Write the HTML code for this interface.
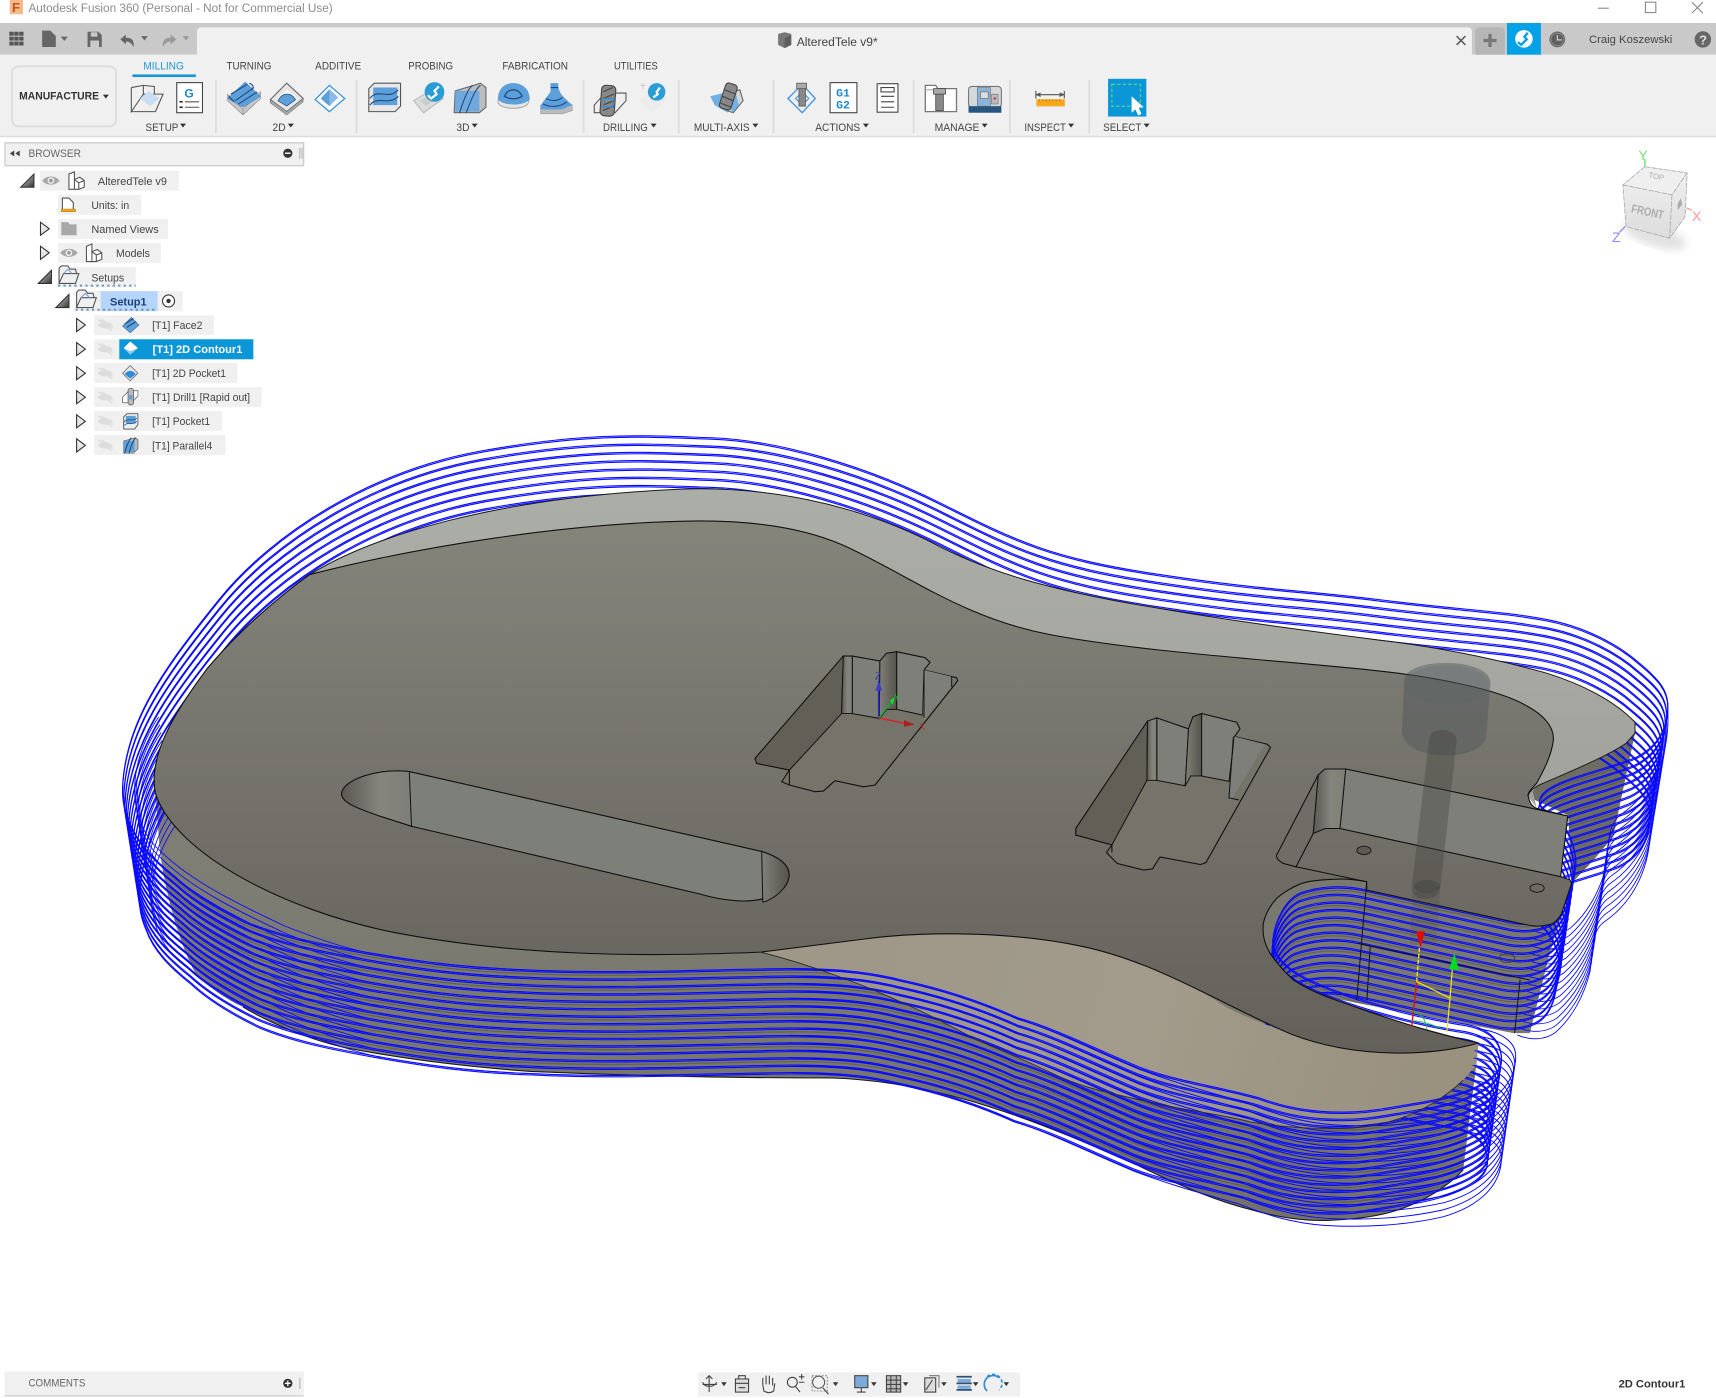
<!DOCTYPE html>
<html><head><meta charset="utf-8"><title>Autodesk Fusion 360</title>
<style>
html,body{margin:0;padding:0;background:#fff;overflow:hidden;width:1716px;height:1398px}
#r{display:block;position:absolute;left:0;top:0;width:1716px;height:1398px}
text{font-family:"Liberation Sans",sans-serif;font-size:10px;fill:#444}
.b{font-weight:bold}
.g{fill:#666}
</style></head><body>
<svg id="r" viewBox="0 0 1568 1277.4" preserveAspectRatio="none" xmlns="http://www.w3.org/2000/svg">
<defs>
<linearGradient id="fc" x1="0" y1="480" x2="0" y2="960" gradientUnits="userSpaceOnUse"><stop offset="0" stop-color="#84847b"/><stop offset="1" stop-color="#64615a"/></linearGradient>
<linearGradient id="bg" x1="800" y1="860" x2="1300" y2="1000" gradientUnits="userSpaceOnUse"><stop offset="0" stop-color="#9f9888"/><stop offset=".5" stop-color="#a29b8b"/><stop offset="1" stop-color="#9a917f"/></linearGradient>
<linearGradient id="lt" x1="0" y1="450" x2="0" y2="720" gradientUnits="userSpaceOnUse"><stop offset="0" stop-color="#abaea7"/><stop offset="1" stop-color="#a2a39c"/></linearGradient>
<linearGradient id="wl" x1="0" y1="750" x2="0" y2="1110" gradientUnits="userSpaceOnUse"><stop offset="0" stop-color="#7f7f75"/><stop offset="1" stop-color="#73726a"/></linearGradient>
<linearGradient id="cyl" x1="0" x2="1" y1="0" y2="0"><stop offset="0" stop-color="#5a5850"/><stop offset=".55" stop-color="#85857d"/><stop offset="1" stop-color="#7e7f78"/></linearGradient>
<linearGradient id="cyr" x1="0" x2="1" y1="0" y2="0"><stop offset="0" stop-color="#808179"/><stop offset="1" stop-color="#55534b"/></linearGradient>
<linearGradient id="tr" x1="0" x2="1" y1="0" y2="1"><stop offset="0" stop-color="#ddd"/><stop offset="1" stop-color="#333"/></linearGradient>
<linearGradient id="cu" x1="0" y1="0" x2="0" y2="1"><stop offset="0" stop-color="#f2f2f2"/><stop offset="1" stop-color="#dcdcdc"/></linearGradient>
<filter id="bl"><feGaussianBlur stdDeviation="4"/></filter>
<path id="wall1" d="M142,725L146,777C150,810 162,860 180,892C195,905 210,915 222,920C250,937 285,950 314,957C370,968 430,975 485,979C600,984 700,985 760,985C860,988 950,1025 1040,1065C1075,1082 1110,1097 1142,1105C1170,1113 1195,1116 1215,1115C1240,1114 1262,1111 1279,1105C1305,1096 1325,1082 1337,1069L1349,973L1351,953L1000,860L695,860L300,800Z"/>
<path id="wall2" d="M1248,806L1436,807L1416,871L1398,944L1383,944L1212,911L1180,905L1140,850L1150,805L1218,795Z"/>
<path id="wall3" d="M1396,728L1420,700L1490,660L1494,670L1474,764.500L1456,786L1436,807L1433,745Z"/>
<path id="bgp" d="M695,870C760,858 850,850 920,853C1000,858 1060,880 1120,920C1180,950 1250,968 1351,953L1349,973L1337,987C1320,1003 1300,1015 1279,1022C1255,1030 1235,1032 1212,1031C1185,1031 1165,1029 1142,1025C1115,1018 1085,1015 1055,1008C1020,1000 990,995 960,980C935,968 915,960 892,950C870,938 845,925 822,915C800,905 780,897 760,890C735,881 715,875 695,870Z"/>
<clipPath id="wc"><use href="#wall1"/><use href="#wall2"/><use href="#wall3"/></clipPath>
<clipPath id="bc"><use href="#bgp"/></clipPath>
<path id="c0" d="M112,720C114,660 150,610 200,548S340,430 440,412S590,398 650,400S790,425 860,460S960,510 1060,525S1180,538 1261,548S1370,558 1413,566C1450,573 1480,590 1498,606C1515,620 1524,630 1524,645C1524,665 1515,682 1495,692C1470,702 1440,708 1420,718C1405,726 1402,735 1415,742C1430,750 1440,770 1440,790L1436,807C1434,820 1428,835 1413,840C1405,843 1395,845 1380,842L1248,813C1225,808 1205,810 1188,816C1175,822 1165,840 1163,859C1163,875 1180,888 1200,897C1240,915 1300,930 1340,936C1360,940 1372,950 1372,968C1372,985 1345,1000 1294,1008C1270,1012 1250,1016 1233,1016C1200,1017 1175,1012 1150,1003C1110,992 1075,988 1041,975C1000,958 965,940 930,930C890,912 855,902 822,895C790,887 760,885 720,885C640,886 560,890 478,886C420,884 380,878 334,870C290,862 255,855 224,842C195,828 175,815 160,801C140,785 125,770 118,750C113,738 112,730 112,720Z"/>
<path id="c0f" d="M1372,968C1372,985 1345,1000 1294,1008C1270,1012 1250,1016 1233,1016C1200,1017 1175,1012 1150,1003C1110,992 1075,988 1041,975C1000,958 965,940 930,930C890,912 855,902 822,895C790,887 760,885 720,885"/>
<path id="c1" d="M1524,650C1526,690 1510,725 1480,745C1468,755 1470,775 1468,790C1462,815 1450,835 1435,848C1425,855 1412,855 1400,850"/>
<path id="c2" d="M145,655C128,680 120,710 124,735C128,755 135,768 148,779C175,805 215,825 260,846C285,856 310,865 334,870C380,878 420,884 478,886"/>
<path id="c3" d="M1350,940C1368,942 1385,950 1385,965C1385,990 1365,1010 1330,1020C1295,1028 1255,1030 1221,1028C1190,1026 1165,1018 1140,1008C1105,998 1075,990 1041,977C1000,960 965,942 930,931C890,913 855,903 822,896C790,888 760,886 720,885"/>
<g id="one" fill="none" stroke="#0a0aff">
<use href="#c0" stroke-width="1"/><use href="#c0" transform="translate(0,1.300)" stroke-width="1"/>
<use href="#c1" stroke-width=".8"/><use href="#c2" stroke-width=".8"/><use href="#c3" stroke-width=".9"/>
</g>
<g id="onef" fill="none" stroke="#0a0aff">
<use href="#c0f" stroke-width="1"/><use href="#c0f" transform="translate(0,1.300)" stroke-width="1"/><use href="#c3" stroke-width=".9"/>
</g>
<g id="lv">
<use href="#one"/>
<use href="#one" transform="matrix(.9984 0 0 .9984 1.280 8.200)"/>
<use href="#one" transform="matrix(.9968 0 0 .9968 2.560 16.400)"/>
<use href="#one" transform="matrix(.9952 0 0 .9952 3.840 24.600)"/>
<use href="#one" transform="matrix(.9936 0 0 .9936 5.120 32.800)"/>
<use href="#one" transform="matrix(.992 0 0 .992 6.400 41)"/>
<use href="#one" transform="matrix(.9904 0 0 .9904 7.680 49.200)"/>
<use href="#one" transform="matrix(.9888 0 0 .9888 8.960 57.400)"/>
<use href="#one" transform="matrix(.9872 0 0 .9872 10.240 65.600)"/>
<use href="#one" transform="matrix(.9856 0 0 .9856 11.520 73.800)"/>
<use href="#one" transform="matrix(.984 0 0 .984 12.800 82)"/>
<use href="#one" transform="matrix(.9824 0 0 .9824 14.080 90.200)"/>
<use href="#one" transform="matrix(.9808 0 0 .9808 15.360 98.400)"/>
<use href="#one" transform="matrix(.9792 0 0 .9792 16.640 106.600)"/>
<use href="#one" transform="matrix(.9776 0 0 .9776 17.920 114.800)"/>
</g>
<g id="lvf">
<use href="#onef"/>
<use href="#onef" transform="matrix(.9984 0 0 .9984 1.280 8.200)"/>
<use href="#onef" transform="matrix(.9968 0 0 .9968 2.560 16.400)"/>
<use href="#onef" transform="matrix(.9952 0 0 .9952 3.840 24.600)"/>
<use href="#onef" transform="matrix(.9936 0 0 .9936 5.120 32.800)"/>
<use href="#onef" transform="matrix(.992 0 0 .992 6.400 41)"/>
</g>
<g id="lvd" fill="none" stroke="#3c3b36" stroke-width="1">
<use href="#c0" transform="translate(0,3.500)"/>
<use href="#c0" transform="matrix(.9968 0 0 .9968 2.560 19.900)"/>
<use href="#c0" transform="matrix(.9936 0 0 .9936 5.120 36.300)"/>
<use href="#c0" transform="matrix(.9904 0 0 .9904 7.680 52.700)"/>
<use href="#c0" transform="matrix(.9872 0 0 .9872 10.240 69.100)"/>
<use href="#c0" transform="matrix(.984 0 0 .984 12.800 85.500)"/>
<use href="#c0" transform="matrix(.9808 0 0 .9808 15.360 101.900)"/>
</g>
<g id="eye"><path d="M-8,0C-4,-5 4,-5 8,0C4,5 -4,5 -8,0Z" fill="#a8a8a8"/><circle r="3" fill="#eee"/><circle r="1.700" fill="#999"/></g>
<g id="eo"><path d="M-7,0C-3,-4 3,-4 7,0C3,4 -3,4 -7,0Z" fill="#ddd"/><path d="M-6,-5L6,5M-3,-5L7,3" stroke="#ddd" stroke-width="1.500" fill="none"/></g>
<g id="cmp" fill="#fff" stroke="#555" stroke-width="1"><path d="M-7,-6L-2,-8V-1L3,-3L7,0V6L2,8H-7Z"/><path d="M-2,-1V8M-2,-1L2,2M2,2L7,0M2,2V8" fill="none"/></g>
<g id="op" fill="none" stroke="#555" stroke-width="1"><path d="M-9,-7L-7,-9H-1L1,-6H6L7,-2M-9,7V-7M-9,7L-5,-2H9L6,7Z"/><path d="M-5,-2L-1,-6L3,-2" stroke="#7aa7d6"/></g>
<path id="tR" d="M-4,-6L4,0L-4,6Z" fill="url(#cu)" stroke="#333"/>
<path id="tD" d="M6,-6V6H-6Z" fill="url(#tr)" stroke="#333"/>
</defs>

<rect width="1568" height="1278" fill="#fff"/>

<!-- title bar -->
<rect x="9" y="0" width="12" height="13" fill="#f6b98a"/>
<text x="11" y="11" class="b" style="font-size:12px;fill:#c0551e">F</text>
<text x="26" y="11" textLength="278" lengthAdjust="spacingAndGlyphs" style="font-size:11px;fill:#8b8b8b">Autodesk Fusion 360 (Personal - Not for Commercial Use)</text>
<path d="M1460,7.500H1470" stroke="#888"/>
<rect x="1503.500" y="2" width="9.500" height="9.500" fill="none" stroke="#888"/>
<path d="M1546,2L1556,12M1556,2L1546,12" stroke="#888"/>

<!-- app band -->
<rect y="21" width="1568" height="29" fill="#c9c9c9"/>
<path d="M180,50V29Q180,25 184,25H1341Q1345,25 1345,29V50Z" fill="#f0f0f0"/>
<rect y="50" width="1568" height="74" fill="#f0f0f0"/>
<rect y="124" width="1568" height="1.400" fill="#dcdcdc"/>
<g fill="#555"><rect x="8.500" y="29" width="4" height="3.600"/><rect x="13" y="29" width="4" height="3.600"/><rect x="17.500" y="29" width="4" height="3.600"/><rect x="8.500" y="33.500" width="4" height="3.600"/><rect x="13" y="33.500" width="4" height="3.600"/><rect x="17.500" y="33.500" width="4" height="3.600"/><rect x="8.500" y="38" width="4" height="3.600"/><rect x="13" y="38" width="4" height="3.600"/><rect x="17.500" y="38" width="4" height="3.600"/></g>
<path d="M38.500,28H46L51,33V43H38.500Z" fill="#666"/><path d="M55.500,33.500H62L58.800,37.500Z" fill="#666"/>
<path d="M80,29H90L93,32V43H80Z" fill="#666"/><rect x="83" y="29.500" width="6" height="4" fill="#c9c9c9"/><rect x="82.500" y="37" width="8" height="6" fill="#c9c9c9"/>
<path d="M110,36L115,31.500V34.500C120,34 123,37 122,43C120,39 118,38 115,38V40.500Z" fill="#666"/><path d="M129,33H135L132,37Z" fill="#666"/>
<path d="M161,36L156,31.500V34.500C151,34 148,37 149,43C151,39 153,38 156,38V40.500Z" fill="#999"/><path d="M167,33H173L170,37Z" fill="#999"/>
<path d="M1331,33L1339,41M1339,33L1331,41" stroke="#555" stroke-width="1.400"/>
<path d="M711,31L717,29.500L723,31V41L717,44L711,41Z" fill="#777"/><path d="M717,35V44L723,41V32Z" fill="#5d5d5d"/>
<text x="728" y="42" textLength="74" lengthAdjust="spacingAndGlyphs" style="font-size:11px;fill:#444">AlteredTele v9*</text>

<path d="M1348,50V29Q1348,25 1352,25H1371Q1375,25 1375,29V50Z" fill="#b6b6b6"/>
<path d="M1361.500,31V43M1355.500,37H1367.500" stroke="#777" stroke-width="3"/>
<rect x="1377" y="21" width="31" height="29" fill="#03a1e6"/>
<circle cx="1392.500" cy="35.500" r="8" fill="#fff"/><path d="M1396,30L1393,33.500L1395,36L1390,41L1387,38.500" stroke="#03a1e6" stroke-width="2.200" fill="none"/>
<circle cx="1423" cy="36" r="7.500" fill="#666" stroke="#c9c9c9" stroke-width=".6"/><circle cx="1423" cy="36" r="5.800" fill="#5f5f5f" stroke="#aaa" stroke-width=".5"/><path d="M1423,32V36.500H1427" stroke="#ddd" stroke-width="1" fill="none"/>
<text x="1452" y="39.500" textLength="76" lengthAdjust="spacingAndGlyphs" style="font-size:10.500px;fill:#444">Craig Koszewski</text>
<circle cx="1556" cy="36" r="7.500" fill="#666"/><text x="1552.500" y="40.500" class="b" style="font-size:12px;fill:#ddd">?</text>

<!-- ribbon -->
<rect x="11" y="60.500" width="95" height="55" rx="6" fill="#f0f0f0" stroke="#dcdcdc" stroke-width="1.600"/>
<text x="17.500" y="91" class="b" textLength="73" lengthAdjust="spacingAndGlyphs" style="fill:#333">MANUFACTURE</text><path d="M94,86.500H99.500L96.700,90Z" fill="#333"/>
<text x="131" y="63.500" textLength="37" lengthAdjust="spacingAndGlyphs" style="fill:#1b94d8">MILLING</text>
<rect x="121" y="68" width="58" height="2.400" fill="#1596d8"/>
<text x="207" y="63.500" textLength="41" lengthAdjust="spacingAndGlyphs">TURNING</text>
<text x="288" y="63.500" textLength="42" lengthAdjust="spacingAndGlyphs">ADDITIVE</text>
<text x="373" y="63.500" textLength="41" lengthAdjust="spacingAndGlyphs">PROBING</text>
<text x="459" y="63.500" textLength="60" lengthAdjust="spacingAndGlyphs">FABRICATION</text>
<text x="561" y="63.500" textLength="40" lengthAdjust="spacingAndGlyphs">UTILITIES</text>

<g fill="#dcdcdc"><rect x="196.500" y="73" width="1.600" height="49"/><rect x="325" y="73" width="1.600" height="49"/><rect x="532.500" y="73" width="1.600" height="49"/><rect x="619.500" y="73" width="1.600" height="49"/><rect x="706" y="73" width="1.600" height="49"/><rect x="834" y="73" width="1.600" height="49"/><rect x="922" y="73" width="1.600" height="49"/><rect x="994.500" y="73" width="1.600" height="49"/></g>
<text x="133" y="119.500" textLength="30" lengthAdjust="spacingAndGlyphs">SETUP</text><path d="M164.500,113H170L167.200,116.500Z" fill="#333"/>
<text x="249" y="119.500" textLength="12" lengthAdjust="spacingAndGlyphs">2D</text><path d="M263,113H268.500L265.700,116.500Z" fill="#333"/>
<text x="417" y="119.500" textLength="12" lengthAdjust="spacingAndGlyphs">3D</text><path d="M431,113H436.500L433.700,116.500Z" fill="#333"/>
<text x="551" y="119.500" textLength="41" lengthAdjust="spacingAndGlyphs">DRILLING</text><path d="M594.500,113H600L597.200,116.500Z" fill="#333"/>
<text x="634" y="119.500" textLength="51" lengthAdjust="spacingAndGlyphs">MULTI-AXIS</text><path d="M687.500,113H693L690.200,116.500Z" fill="#333"/>
<text x="745" y="119.500" textLength="41" lengthAdjust="spacingAndGlyphs">ACTIONS</text><path d="M788.500,113H794L791.200,116.500Z" fill="#333"/>
<text x="854" y="119.500" textLength="41" lengthAdjust="spacingAndGlyphs">MANAGE</text><path d="M897,113H902.500L899.700,116.500Z" fill="#333"/>
<text x="936" y="119.500" textLength="38" lengthAdjust="spacingAndGlyphs">INSPECT</text><path d="M976,113H981.500L978.700,116.500Z" fill="#333"/>
<text x="1008" y="119.500" textLength="35" lengthAdjust="spacingAndGlyphs">SELECT</text><path d="M1045,113H1050.500L1047.700,116.500Z" fill="#333"/>

<!-- setup icons -->
<g fill="none" stroke="#555" stroke-width="1"><path d="M120,80L131,78V87M120,80V102L131,86H149L142,102H120M131,78L141,79V86"/><path d="M128,90L136,83L146,90L137,97Z" fill="#c9def2" stroke="none"/></g>
<rect x="161.500" y="75.500" width="23.500" height="27.500" fill="#fff" stroke="#444"/>
<text x="168.500" y="89" class="b" style="font-size:11px;fill:#1e88d0">G</text>
<path d="M164,93H167M164,98H167" stroke="#333" stroke-width="1.600"/><path d="M169,93H182M169,98H182" stroke="#555"/>
<!-- 2d -->
<path d="M208,84L222,98V103L208,90ZM222,98L238,82V88L222,103" fill="#c8c8c8" stroke="#888" stroke-width=".6" transform="translate(0,2)"/>
<path d="M208,90L224,75L238,88L222,98Z" fill="#5d9fdb" stroke="#4a87c0" stroke-width=".5"/>
<path d="M211,86L226,77M215,92L232,80M218,95L235,84M209,88L214,93M228,76C232,78 232,80 230,82" stroke="#1e4c7c" fill="none" stroke-width="1"/>
<path d="M247,91L262,76L277,90L262,102Z" fill="#e6e6e6" stroke="#666"/><path d="M247,91V94L262,105L277,93V90L262,102Z" fill="#aaa" stroke="#666" stroke-width=".5"/><path d="M252,91L262,82L272,90L262,98Z" fill="#fff"/><path d="M254,92C258,84 266,84 270,91L262,97Z" fill="#5d9fdb" stroke="#24507e" stroke-width=".7"/>
<path d="M288,91L301,78L315,90L301,102Z" fill="#fff" stroke="#3f94dc" stroke-width="1.200"/><path d="M293,90L301,81.500L309,89L301,97Z" fill="#5d9fdb"/><path d="M301,81.500L309,89L301,97Z" fill="#8cbbe5"/>
<!-- 3d -->
<path d="M337,81L342,76H366V97L361,102H337Z" fill="#e8e8e8" stroke="#555"/><path d="M341,80H363V96H341Z" fill="#5d9fdb"/><path d="M338,90C345,80 355,92 364,82M338,96C345,87 355,97 364,88" stroke="#1e4c7c" fill="none"/>
<path d="M378,92L396,81L405,90L387,103Z" fill="#ddd" stroke="#bbb"/><path d="M384,92L395,86L399,90L389,97Z" fill="#ccc"/><circle cx="397" cy="84" r="9" fill="#2a9cd6"/><path d="M401,79L397,83L399,86L394,90L391,87" stroke="#fff" stroke-width="2" fill="none"/>
<path d="M416,83L439,76L444,80V98L438,103H415Z" fill="#bdbdbd" stroke="#666"/><path d="M416,83H438V102H416Z" fill="#6fa9dd"/><path d="M420,103C424,90 428,80 432,78M426,103C431,90 434,82 439,78" stroke="#1e4c7c" fill="none"/>
<ellipse cx="469" cy="93" rx="14" ry="6" fill="#e5e5e5" stroke="#aaa"/><path d="M455,91C455,80 462,76 469,76C476,76 484,80 484,91C478,97 461,97 455,91Z" fill="#5d9fdb"/><path d="M461,88C464,80 474,80 477,88C472,91 466,91 461,88Z" fill="none" stroke="#1e4c7c" stroke-width="1.200"/>
<path d="M494,96H523V101L514,104H494Z" fill="#bbb" stroke="#999" stroke-width=".5"/><path d="M494,96L503,84V76H510C510,85 514,88 523,96L513,100H494Z" fill="#5d9fdb"/><path d="M499,90C505,93 510,92 514,89M496,95C505,99 513,97 518,93M503,80L510,80" stroke="#1e4c7c" fill="none"/>
<!-- drilling -->
<path d="M543,96L553,85H572V92L562,103H543Z" fill="#eee" stroke="#555"/><rect x="549" y="78" width="13" height="28" rx="4" transform="rotate(4 555 92)" fill="#888" stroke="#444"/><path d="M551,84L560,80M551,90L561,86M551,96L561,92M551,101L561,97" stroke="#444"/><rect x="552" y="90" width="8" height="8" fill="none" stroke="#2f8bd9"/>
<path d="M583,92L596,84L610,90L600,100L594,103L590,96Z" fill="#ececec"/><path d="M585,78H590M587.500,76V81" stroke="#ccc"/><circle cx="600" cy="84" r="8" fill="#2a9cd6"/><path d="M603,80L600,84L601,86L597,89" stroke="#fff" stroke-width="2" fill="none"/>
<!-- multiaxis -->
<path d="M651,90L676,82L679,92L670,103L661,100Z" fill="#d5d5d5" stroke="#666"/><path d="M649,88L661,85L665,103L653,96Z" fill="#6fb0e6"/><path d="M664,88L672,84L675,96L669,103Z" fill="#6fb0e6"/><rect x="660" y="76" width="11" height="24" rx="3" transform="rotate(18 665 88)" fill="#888" stroke="#444"/><path d="M662,82L672,86M660,88L670,92M658,94L668,98" stroke="#444"/>
<!-- actions -->
<path d="M720,90L733,77L745,90L733,103Z" fill="none" stroke="#3f94dc" stroke-width="1.200"/><path d="M727,90L733,84L739,90L733,96Z" fill="none" stroke="#3f94dc"/><rect x="730" y="81" width="6" height="16" fill="#888" stroke="#555" stroke-width=".7"/><rect x="728" y="76" width="9" height="5" fill="#aaa" stroke="#555" stroke-width=".7"/>
<rect x="758.500" y="75.500" width="24.500" height="27.500" fill="#fff" stroke="#444"/>
<text x="764" y="88" class="b" style="font-size:10.500px;fill:#1e88d0;font-family:'Liberation Mono',monospace">G1</text><text x="764" y="99" class="b" style="font-size:10.500px;fill:#1e88d0;font-family:'Liberation Mono',monospace">G2</text>
<rect x="801.500" y="76.500" width="19" height="26" fill="#fff" stroke="#444"/><rect x="805" y="80" width="12" height="4" fill="#fff" stroke="#444"/><path d="M805,88H817M805,93H817M805,98H817" stroke="#444"/>
<!-- manage -->
<path d="M845.500,78H855L857,81H874V102H845.500Z" fill="#fff" stroke="#777" stroke-width="1.200"/><path d="M845.500,82H857" stroke="#aaa"/><rect x="855" y="86" width="7" height="15" fill="#888" stroke="#444" stroke-width=".7"/><rect x="853" y="81" width="11" height="5" fill="#aaa" stroke="#444" stroke-width=".7"/>
<rect x="885" y="79" width="30" height="19" rx="3" fill="#d5d8da" stroke="#777"/><rect x="885" y="97" width="30" height="6" fill="#26557f"/><rect x="893" y="80" width="12" height="17" fill="#8cb4d8" stroke="#666" stroke-width=".5"/><rect x="896" y="84" width="7" height="6" fill="#ddd" stroke="#555" stroke-width=".5"/><rect x="906" y="86" width="6" height="9" fill="#bbb" stroke="#666" stroke-width=".5"/><rect x="908" y="89" width="2" height="2" fill="#d0246e"/>
<!-- inspect -->
<path d="M946.500,83V90M972.500,83V90M947,86.500H972M947,86.500L951,85M947,86.500L951,88M972,86.500L968,85M972,86.500L968,88" stroke="#555" fill="none"/><rect x="947" y="90.700" width="26" height="6.500" fill="#f5a81c"/><path d="M950,90.700v2M953,90.700v2M956,90.700v2M959,90.700v2M962,90.700v2M965,90.700v2M968,90.700v2" stroke="#a86b00" stroke-width=".6"/>
<!-- select -->
<rect x="1012.500" y="72" width="35" height="34.500" fill="#0b96d8"/><rect x="1016" y="77" width="26" height="20" fill="none" stroke="#65d97e" stroke-dasharray="3,2"/><path d="M1034,88V103L1037.500,100L1040,105.500L1043,104L1040.500,98.500L1045,98Z" fill="#fff"/>

<!-- browser panel -->
<rect x="4.500" y="130.500" width="273" height="21" fill="#f0f0f0" stroke="#c5c5c5"/>
<path d="M13,137.500V143L9,140.200ZM18,137.500V143L14,140.200Z" fill="#444"/>
<text x="26" y="143.500" textLength="48" lengthAdjust="spacingAndGlyphs" class="g">BROWSER</text>
<circle cx="263" cy="140" r="4.200" fill="#333"/><path d="M260.500,140H265.500" stroke="#fff" stroke-width="1.300"/><path d="M274,135V145M276,135V145" stroke="#999" stroke-width=".7"/>

<g fill="#f0f0f0">
<rect x="36.500" y="156" width="127" height="18.300"/><rect x="53" y="178" width="76" height="18.300"/><rect x="53" y="200" width="100.500" height="18.300"/><rect x="53" y="222" width="94" height="18.300"/><rect x="53" y="244" width="71" height="18.300"/><rect x="69" y="266" width="98" height="18.300"/>
<rect x="86" y="288" width="109.500" height="18.300"/><rect x="86" y="310" width="23" height="18.300"/><rect x="86" y="331.700" width="131" height="18.300"/><rect x="86" y="353.700" width="153" height="18.300"/><rect x="86" y="375.500" width="117" height="18.300"/><rect x="86" y="397.500" width="120" height="18.300"/></g>
<rect x="92" y="266" width="52" height="18.300" fill="#b5d5fb"/>
<rect x="109" y="310" width="122.500" height="18.300" fill="#0b96d8"/>

<use href="#tD" x="25" y="165"/><use href="#eye" x="46.500" y="165"/><use href="#cmp" x="70" y="165"/>
<text x="89.500" y="169" textLength="63" lengthAdjust="spacingAndGlyphs">AlteredTele v9</text>
<path d="M57,181H63L67,185V193H57Z" fill="#fff" stroke="#555"/><rect x="56" y="191" width="13" height="2.500" fill="#f0a818" stroke="#a86b00" stroke-width=".4"/>
<text x="83.500" y="191" textLength="34.500" lengthAdjust="spacingAndGlyphs">Units: in</text>
<use href="#tR" x="41" y="209"/><path d="M56,203H62L64,205H70V215H56Z" fill="#a8a8a8"/>
<text x="83.500" y="213" textLength="61.500" lengthAdjust="spacingAndGlyphs">Named Views</text>
<use href="#tR" x="41" y="231"/><use href="#eye" x="63" y="231"/><use href="#cmp" x="86" y="231"/>
<text x="106" y="235" textLength="31" lengthAdjust="spacingAndGlyphs">Models</text>
<use href="#tD" x="41" y="253"/><use href="#op" x="63" y="252"/>
<text x="83.500" y="257" textLength="30" lengthAdjust="spacingAndGlyphs">Setups</text>
<path d="M53,261H124" stroke="#6c92bb" stroke-width="1.800" stroke-dasharray="2,3"/>
<use href="#tD" x="57" y="275"/><use href="#op" x="79" y="274"/>
<path d="M69,283H144" stroke="#6c92bb" stroke-width="1.800" stroke-dasharray="2,3"/>
<text x="100.500" y="279" class="b" textLength="33.500" lengthAdjust="spacingAndGlyphs" style="fill:#1a3f7e">Setup1</text>
<circle cx="154" cy="275" r="5.500" fill="#fff" stroke="#333"/><circle cx="154" cy="275" r="2" fill="#333"/>

<use href="#tR" x="74" y="297"/><use href="#eo" x="96" y="297"/>
<path d="M112,298L120,290L127,297L119,304Z" fill="#5d9fdb" stroke="#446f99" stroke-width=".6"/><path d="M114,296L122,291M116,299L124,294" stroke="#1e4c7c"/>
<text x="139" y="300.500" textLength="46" lengthAdjust="spacingAndGlyphs">[T1] Face2</text>
<use href="#tR" x="74" y="319"/><use href="#eo" x="96" y="319"/>
<path d="M113,318L119,312L126,318L119,324Z" fill="#fff"/><path d="M113,318L119,324L126,318L119,321Z" fill="#8cc7ec"/>
<text x="139.500" y="322.500" class="b" textLength="82" lengthAdjust="spacingAndGlyphs" style="fill:#fff">[T1] 2D Contour1</text>
<use href="#tR" x="74" y="341"/><use href="#eo" x="96" y="341"/>
<path d="M112,341L119,334L126,341L119,348Z" fill="#e6e6e6" stroke="#666" stroke-width=".7"/><path d="M114,342C116,338 122,338 124,342L119,346Z" fill="#2f8bd9"/>
<text x="139" y="344.500" textLength="67.500" lengthAdjust="spacingAndGlyphs">[T1] 2D Pocket1</text>
<use href="#tR" x="74" y="363"/><use href="#eo" x="96" y="363"/>
<path d="M112,363L118,357H126V362L120,368H112Z" fill="#fff" stroke="#666" stroke-width=".7"/><rect x="117" y="355" width="5" height="15" rx="2" fill="#bbb" stroke="#555" stroke-width=".7"/><rect x="118" y="361" width="3" height="4" fill="#5d9fdb"/>
<text x="139" y="366.500" textLength="89.500" lengthAdjust="spacingAndGlyphs">[T1] Drill1 [Rapid out]</text>
<use href="#tR" x="74" y="385"/><use href="#eo" x="96" y="385"/>
<path d="M113,381L116,378H126V388L123,392H113Z" fill="#eee" stroke="#555" stroke-width=".8"/><rect x="115" y="380" width="9" height="7" fill="#5d9fdb"/><path d="M113,386C117,381 121,386 125,382M113,389C117,385 121,389 125,385" stroke="#1e4c7c" fill="none" stroke-width=".7"/>
<text x="139" y="388.500" textLength="53" lengthAdjust="spacingAndGlyphs">[T1] Pocket1</text>
<use href="#tR" x="74" y="407"/><use href="#eo" x="96" y="407"/>
<path d="M113,403L124,400L126,402V410L122,414H113Z" fill="#bbb" stroke="#666" stroke-width=".7"/><rect x="113" y="403" width="10" height="10" fill="#5d9fdb"/><path d="M114,414C116,406 118,402 120,400M118,414C120,406 122,402 124,400" stroke="#1e4c7c" fill="none"/>
<text x="139" y="410.500" textLength="55" lengthAdjust="spacingAndGlyphs">[T1] Parallel4</text>

<!-- walls under lines -->
<use href="#wall1" fill="url(#wl)"/>
<use href="#wall2" fill="#7a796f"/>
<use href="#wall3" fill="#6e6d64"/>
<path d="M1337,1069C1325,1082 1305,1096 1279,1105C1262,1111 1240,1114 1215,1115C1195,1116 1170,1113 1142,1105C1110,1097 1075,1082 1040,1065C950,1025 860,988 760,985C700,985 600,984 485,979C430,975 370,968 314,957C285,950 250,937 222,920" fill="none" stroke="#1a1a18" stroke-width="1"/>
<g clip-path="url(#wc)"><use href="#lvd" opacity=".38"/></g>
<use href="#lv"/>

<!-- light back surface -->
<path d="M283,525C340,490 450,455 620,447C700,444 780,460 850,495C900,522 960,540 1060,556C1130,568 1200,577 1261,585C1320,592 1370,603 1413,615C1445,625 1475,640 1494,660L1494,670L1486,679C1470,690 1440,703 1407,717C1400,721 1396,725 1396.500,728L1404,738L1395,700L1300,640L1000,630L800,560L640,510Z" fill="url(#lt)"/>
<path d="M283,525C340,490 450,455 620,447C700,444 780,460 850,495C900,522 960,540 1060,556C1130,568 1200,577 1261,585C1320,592 1370,603 1413,615C1445,625 1475,640 1494,660L1494,670L1486,679C1470,690 1440,703 1407,717C1400,721 1396,725 1396.500,728" fill="none" stroke="#1a1a18" stroke-width=".9"/>
<!-- beige lower surface -->
<use href="#bgp" fill="url(#bg)"/>
<g clip-path="url(#bc)"><use href="#lvf"/></g>
<path d="M695,870C715,875 735,881 760,890C780,897 800,905 822,915C845,925 870,938 892,950C915,960 935,968 960,980C990,995 1020,1000 1055,1008C1085,1015 1115,1018 1142,1025C1165,1029 1185,1031 1212,1031C1235,1032 1255,1030 1279,1022C1300,1015 1320,1003 1337,987" fill="none" stroke="#2a2a26" stroke-width=".8"/>

<!-- top face -->
<path id="face" d="M283,525C380,500 520,477 640,476C700,476 740,485 770,498C830,525 880,565 960,580C1040,595 1150,602 1250,612C1310,618 1370,630 1395,645C1412,654 1420,665 1419.400,676C1418,690 1410,705 1404,715.800C1398,722 1395,726 1396.500,728C1398,734 1400,737 1404,738.600L1432.500,745.600L1426,801L1434.600,804L1436,807.200L1427,834.600C1422,843 1418,845 1413,845.300C1405,847 1400,846 1396.500,845.300L1248.800,813.300V805.700C1235,803 1225,803 1218,803.500C1205,804 1195,805 1187.900,807.800C1178,812 1172,816 1166.600,820.900C1160,828 1156,836 1154.400,843.700C1153,855 1156,863 1160.500,871.100C1167,881 1174,888 1181.800,895.500C1190,901 1200,906 1212.200,910.700C1260,928 1310,945 1351,953C1310,965 1240,968 1180,945C1120,920 1060,880 990,865C930,852 850,850 790,858L695,870C600,874 480,875 360,852C260,832 160,780 142,725C135,690 160,650 190,610C220,575 255,545 283,525Z" fill="url(#fc)" stroke="#111" stroke-width="1"/>

<!-- slot -->
<path d="M374,705L696,778C712,783 722,790 721,801C719,815 700,825 672,823C660,822 650,820 640,817L376,755L345,745C325,738 312,733 312,725C314,712 345,702 374,705Z" fill="#7d7f79" stroke="#111" stroke-width="1"/>
<path d="M374,705C345,702 314,712 312,725C312,733 325,738 345,745L376,755Z" fill="url(#cyl)" stroke="#111" stroke-width=".9"/>
<path d="M696,778C712,783 722,790 721,801C719,815 700,825 697,824Z" fill="url(#cyr)" stroke="#111" stroke-width=".9"/>

<!-- pocket 1 -->
<path d="M770.600,599.500L778.800,599.500L804,604L810,597L819.400,595.500L845.300,601L849.800,605.200L844.300,612.200L874.200,619.300L875.100,622L799.600,717.300L789,718.900L763,713.400L752.300,722.800L744.700,723.400L721.300,717.300L714.300,714.300L721.300,703.600L691.400,697.500L689.900,693Z" fill="#75736a" stroke="#111"/>
<path d="M770.600,599.500L769,652L721.300,703.600L691.400,697.500L689.900,693Z" fill="#625f56" stroke="#111" stroke-width=".9"/>
<path d="M778.800,599.500L804,604L803.500,656.400L778.800,652Z" fill="#7e7f78" stroke="#111" stroke-width=".9"/>
<path d="M770.600,599.500L778.800,599.500V652H769Z" fill="url(#cyl)" stroke="#111" stroke-width=".9"/>
<path d="M804,604L810,597L819.400,595.500V648.200H810.200L803.500,656.400Z" fill="url(#cyr)" stroke="#111" stroke-width=".9"/>
<path d="M819.400,595.500L845.300,601L849.800,605.200L844.300,612.200L843.100,653.400L819.400,648.200Z" fill="#7e7f78" stroke="#111" stroke-width=".9"/>
<path d="M844.300,612.200L869.600,618.300V628L843.100,660Z" fill="#7e7f78"/>
<path d="M844.300,612.200V656M869.600,618.300V628" stroke="#111" stroke-width=".9" fill="none"/>
<path d="M721.300,703.600V717.300" stroke="#111"/>
<path d="M803,656V622" stroke="#2323b5" stroke-width="1.500"/><path d="M800,631L803,622L806,631Z" fill="#3b3bd0"/><text x="799.500" y="621" style="font-size:9px;fill:#3030b5">Z</text>
<path d="M803,656L816,640" stroke="#0bb52b" stroke-width="1.300"/><path d="M813,640L817.500,637L816,644Z" fill="#0bdf2b"/><text x="817" y="640" style="font-size:8px;fill:#1cbb3a">Y</text>
<path d="M803,656L832,662" stroke="#e02020" stroke-width="1.300"/><path d="M826,658L836,662L826,664Z" fill="#a82020"/><text x="840" y="667" style="font-size:8px;fill:#b03030">X</text>

<!-- pocket 2 -->
<path d="M1048.500,659L1057,656L1086,666L1090,655L1098,652L1130,660L1133,666L1128,673L1158,680L1161,683L1102,788L1097,790L1060,783L1053,794L1045,795L1021,789L1011,779L1016,772L983,763L983,757Z" fill="#75736a" stroke="#111"/>
<path d="M1048.500,659L1048,713L1016,772L983,763L983,757Z" fill="#625f56" stroke="#111" stroke-width=".9"/>
<path d="M1057,656L1086,666L1083,718L1057,713Z" fill="#7e7f78" stroke="#111" stroke-width=".9"/>
<path d="M1048.500,659L1057,656V713H1048Z" fill="url(#cyl)" stroke="#111" stroke-width=".9"/>
<path d="M1086,666L1090,655L1098,652V709H1088L1083,718Z" fill="url(#cyr)" stroke="#111" stroke-width=".9"/>
<path d="M1098,652L1130,660L1133,666L1128,673L1123,714L1098,709Z" fill="#7e7f78" stroke="#111" stroke-width=".9"/>
<path d="M1128,673L1156,680L1125,731L1123,729Z" fill="#7e7f78"/>
<path d="M1127,673L1123,729L1132,731" stroke="#111" stroke-width=".9" fill="none"/>
<path d="M1016,772V779" stroke="#111"/>

<!-- neck pocket -->
<path d="M1204.600,708L1210.700,702.700H1229.600L1432.500,745.600L1426,801L1224.400,757H1210.700L1200,761.500L1184.200,792L1172.600,788.900C1168,786 1166,784 1166.600,781.300Z" fill="#75736a" stroke="#111"/>
<path d="M1204.600,708L1200,761.500L1184.200,792L1172.600,788.900C1168,786 1166,784 1166.600,781.300Z" fill="#6f6d65" stroke="#111" stroke-width=".9"/>
<path d="M1229.600,702.700L1432.500,745.600L1426,801L1224.400,757Z" fill="#7e7f78" stroke="#111" stroke-width=".9"/>
<path d="M1204.600,708L1210.700,702.700H1229.600L1224.400,757H1210.700L1200,761.500Z" fill="url(#cyl)" stroke="#111" stroke-width=".9"/>
<path d="M1184.200,792L1248.800,805.700" stroke="#111"/>
<ellipse cx="1246.300" cy="777" rx="6.500" ry="3.800" fill="#5d5b53" stroke="#111" stroke-width=".8"/>
<ellipse cx="1404.500" cy="811.500" rx="6.500" ry="3.800" fill="#6c6a62" stroke="#111" stroke-width=".8"/>

<!-- wall lines -->
<path d="M1248.800,806L1239.700,914M1241,862L1398,895.500M1252,865L1249,914M1389,895L1384,944" fill="none" stroke="#111" stroke-width=".9"/>
<ellipse cx="1377" cy="875.500" rx="7" ry="4" fill="none" stroke="#3a3a35" stroke-width=".8"/>

<!-- axes -->
<path d="M1297,866L1294.500,897" stroke="#fcef00" stroke-width="1.200" stroke-dasharray="4,1.500"/>
<path d="M1294.500,897L1290,938" stroke="#d41414" stroke-width="1.300"/>
<path d="M1294,851L1302,851L1298,866Z" fill="#f00"/>
<path d="M1294.500,897L1325,912L1327,886M1325,912L1322,943" fill="none" stroke="#f5e800" stroke-width="1.100"/>
<path d="M1329,871L1333,886H1324Z" fill="#00dc21"/>
<path d="M1290,924C1297,925 1303,930 1304,941M1290,933C1300,932 1312,938 1318,940" fill="none" stroke="#19c030" stroke-width=".8"/>

<!-- tool -->
<path d="M1283,622C1283,600 1362,600 1362,624L1358,672C1356,697 1282,697 1281,668Z" fill="#4a5358" opacity=".42"/>
<ellipse cx="1322" cy="626" rx="39" ry="18" fill="#5a6468" opacity=".2"/>
<path d="M1306,675C1306,664 1331,664 1331,677L1316,812C1314,825 1289,825 1290,810Z" fill="#3f3f3b" opacity=".36"/>
<ellipse cx="1304" cy="810" rx="12" ry="6" fill="#3a3a36" opacity=".35"/>
<path d="M1291,815L1316,815L1312,863L1288,863Z" fill="#3f3f3b" opacity=".16"/>

<!-- view cube -->
<ellipse cx="1512" cy="215" rx="30" ry="10" transform="rotate(18 1512 215)" fill="#aaa" opacity=".35" filter="url(#bl)"/>
<path d="M1503,152.300L1541.600,158L1539.800,198L1525.600,217.700L1485.800,207L1482.900,169Z" fill="url(#cu)"/>
<path d="M1503,152.300L1541.600,158L1527.800,178L1482.900,169Z" fill="#efefef"/>
<path d="M1503,152.300L1541.600,158L1539.800,198L1525.600,217.700L1485.800,207L1482.900,169ZM1482.900,169L1527.800,178L1541.600,158M1527.800,178L1525.600,217.700" fill="none" stroke="#a5a5a5" stroke-width=".7" stroke-dasharray="5,1"/>
<text transform="translate(1490,194) rotate(12)" class="b" style="font-size:11px;fill:#adadad" textLength="30" lengthAdjust="spacingAndGlyphs">FRONT</text>
<text transform="translate(1506,162) rotate(12)" style="font-size:7px;fill:#adadad">TOP</text>
<path d="M1533,186L1536,181L1537,187L1533,192Z" fill="#aaa"/>
<path d="M1503,152V145" stroke="#7be87b" stroke-width="1.500"/><text x="1497" y="146" style="font-size:13px;fill:#7be87b">Y</text>
<path d="M1541,190L1546,192" stroke="#f79a9a" stroke-width="1.200"/><text x="1546" y="202" style="font-size:13px;fill:#f79a9a">X</text>
<path d="M1485,207L1480,212" stroke="#8d8dfa" stroke-width="1.200"/><text x="1473" y="221" style="font-size:13px;fill:#8d8dfa">Z</text>

<!-- comments -->
<rect x="4" y="1253" width="273.500" height="22" fill="#f0f0f0"/><rect x="4" y="1275" width="273.500" height="1" fill="#c5c5c5"/>
<text x="26" y="1267" textLength="52" lengthAdjust="spacingAndGlyphs" class="g">COMMENTS</text>
<circle cx="263" cy="1264" r="4.200" fill="#333"/><path d="M260.500,1264H265.500M263,1261.500V1266.500" stroke="#fff" stroke-width="1.200"/><path d="M274,1259V1269" stroke="#999" stroke-width=".7"/>

<!-- nav bar -->
<rect x="638" y="1254" width="294" height="22" fill="#f0f0f0"/>
<g fill="none" stroke="#444" stroke-width="1">
<path d="M648,1257V1272M642,1265H655M645,1260L648,1257L651,1260M642,1263C644,1268 652,1268 655,1263"/>
<rect x="672" y="1260" width="12" height="12" fill="#ddd"/><path d="M672,1264H684M675,1260V1257H681V1260M675,1268H681"/>
<path d="M697,1265V1259M700,1265V1257M703,1265V1257M706,1266V1259M697,1265L698,1271Q703,1274 707,1271L708,1264"/>
<circle cx="724" cy="1263" r="4.500"/><path d="M727,1267L731,1272M730,1258H735M732.500,1255.500V1260.500M730,1263H735"/>
<circle cx="748" cy="1263" r="5.500" stroke="#555"/><path d="M752,1268L757,1274"/><rect x="742" y="1257" width="14" height="14" stroke-dasharray="1.500,1.500" stroke="#888"/>
<rect x="781" y="1257" width="12" height="11" fill="#7ba9d8"/><path d="M787,1268V1272M783,1272H791"/>
<rect x="810" y="1257" width="13" height="15" fill="#bbb"/><path d="M810,1261H823M810,1265H823M810,1269H823M814,1257V1272M819,1257V1272"/>
<rect x="845" y="1259" width="10" height="13" fill="#dcdcdc"/><path d="M846,1270L852,1261"/><path d="M849,1257H858V1268" stroke="#777"/>
<path d="M874,1258H888M874,1264H888M874,1270H888" stroke="#2f4f76" stroke-width="1.600"/><rect x="875" y="1260" width="12" height="3" fill="#7ba9d8" stroke="none"/><rect x="875" y="1266" width="12" height="3" fill="#7ba9d8" stroke="none"/>
<path d="M913,1259A7,7 0 1 0 902,1271" stroke="#2f8bd9" stroke-width="1.500"/><path d="M902,1258A7,7 0 1 1 913,1270" stroke="#2f8bd9" stroke-width="1.500" stroke-dasharray="3,2"/>
</g>
<g fill="#333"><path d="M659,1263H664L661.500,1266.500Z"/><path d="M761,1263H766L763.500,1266.500Z"/><path d="M796,1263H801L798.500,1266.500Z"/><path d="M825,1263H830L827.500,1266.500Z"/><path d="M860,1263H865L862.500,1266.500Z"/><path d="M889,1263H894L891.500,1266.500Z"/><path d="M917,1263H922L919.500,1266.500Z"/></g>
<text x="1479" y="1268" textLength="61" lengthAdjust="spacingAndGlyphs" class="b" style="fill:#333">2D Contour1</text>
</svg>
</body></html>
